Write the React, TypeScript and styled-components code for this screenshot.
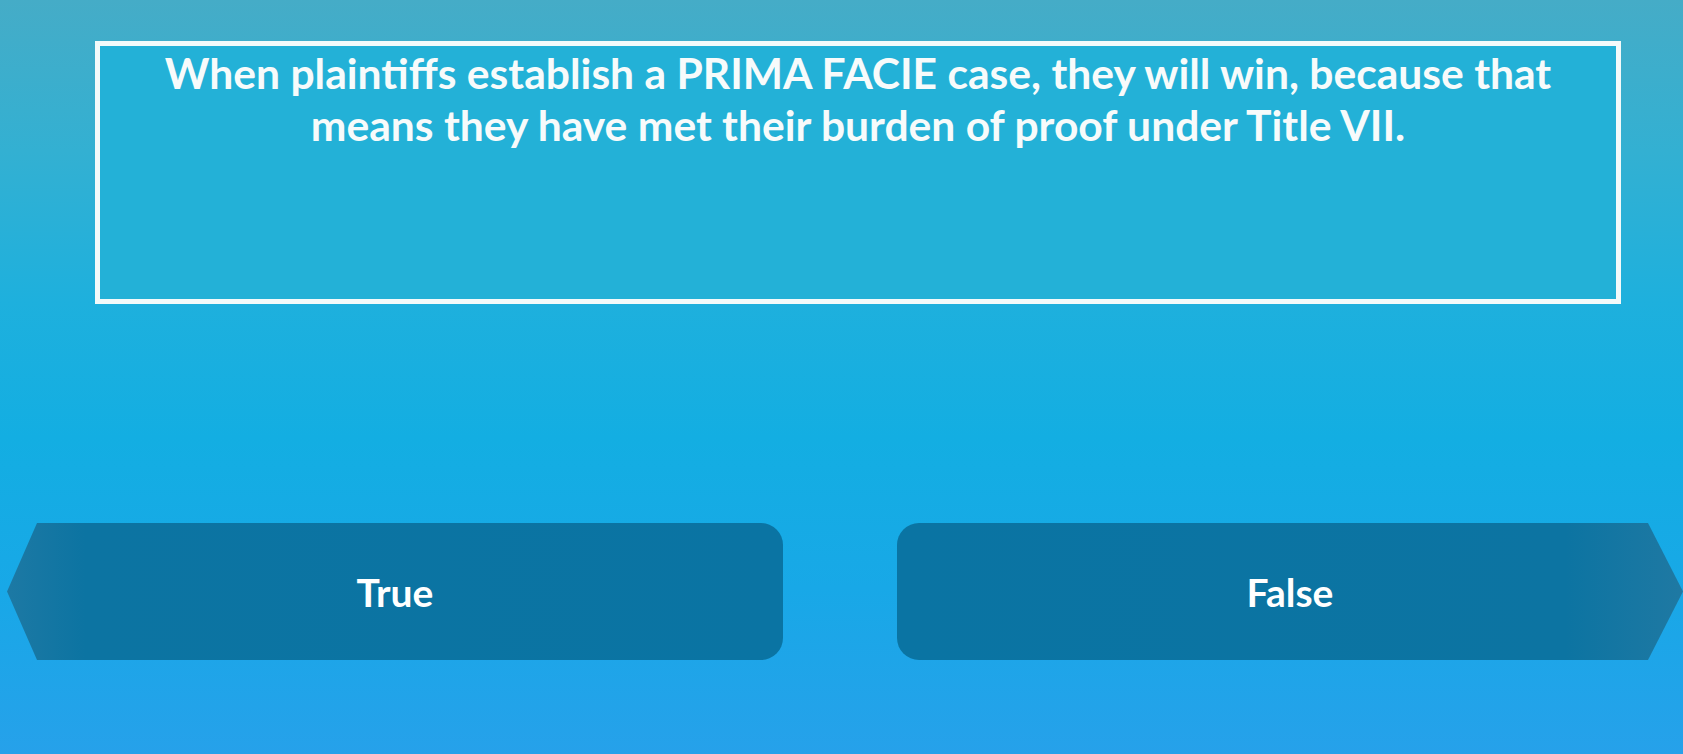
import React from "react";
import styled, { createGlobalStyle } from "styled-components";

const GlobalStyle = createGlobalStyle`
  html, body {
    margin: 0;
    padding: 0;
    width: 1683px;
    height: 754px;
    overflow: hidden;
  }
  body {
    font-family: Lato, "Open Sans", sans-serif;
  }
  * {
    box-sizing: border-box;
  }
`;

const Screen = styled.main`
  width: 1683px;
  height: 754px;
  padding-top: 41px;
  display: flex;
  flex-direction: column;
  background:
    linear-gradient(
      180deg,
      #45acc7 0%,
      #33b0d2 20%,
      #1eb0dd 40%,
      #13aee2 58%,
      #18a8e7 78%,
      #26a1ea 100%
    );
`;

const QuestionCard = styled.section`
  margin-left: 95px;
  width: 1526px;
  height: 263px;
  border: 5px solid #f3fafa;
  background: #23b1d7;
  display: flex;
  justify-content: center;
  align-items: flex-start;
`;

const QuestionText = styled.p`
  margin: 1px 0 0;
  width: 1440px;
  color: #f7fbfb;
  font-family: Lato, "Open Sans", sans-serif;
  font-weight: 700;
  font-size: 42.6px;
  line-height: 52px;
  text-align: center;
`;

const Answers = styled.div`
  margin-top: 219px;
  padding-left: 7px;
  display: flex;
  gap: 114px;
`;

const AnswerButton = styled.button<{ $side: "left" | "right"; $width: number }>`
  width: ${(p) => p.$width}px;
  height: 137px;
  border: none;
  margin: 0;
  padding: 0;
  display: flex;
  align-items: center;
  justify-content: center;
  color: #ffffff;
  font-family: Lato, "Open Sans", sans-serif;
  font-weight: 700;
  font-size: 39px;
  cursor: pointer;
  background: ${(p) =>
    p.$side === "left"
      ? "linear-gradient(90deg, #1d79a4 0%, #0c74a2 10%, #0a74a3 100%)"
      : "linear-gradient(90deg, #0a74a3 0%, #0c74a2 85%, #1f79a3 100%)"};
  border-radius: ${(p) => (p.$side === "left" ? "0 22px 22px 0" : "22px 0 0 22px")};
  clip-path: ${(p) =>
    p.$side === "left"
      ? "polygon(30px 0, 100% 0, 100% 100%, 30px 100%, 0 50%)"
      : "polygon(0 0, calc(100% - 35px) 0, 100% 50%, calc(100% - 35px) 100%, 0 100%)"};
`;

export default function App() {
  return (
    <>
      <GlobalStyle />
      <Screen>
        <QuestionCard>
          <QuestionText>
            When plaintiffs establish a PRIMA FACIE case, they will win, because that
            <br />
            means they have met their burden of proof under Title VII.
          </QuestionText>
        </QuestionCard>
        <Answers>
          <AnswerButton $side="left" $width={776}>
            True
          </AnswerButton>
          <AnswerButton $side="right" $width={786}>
            False
          </AnswerButton>
        </Answers>
      </Screen>
    </>
  );
}
